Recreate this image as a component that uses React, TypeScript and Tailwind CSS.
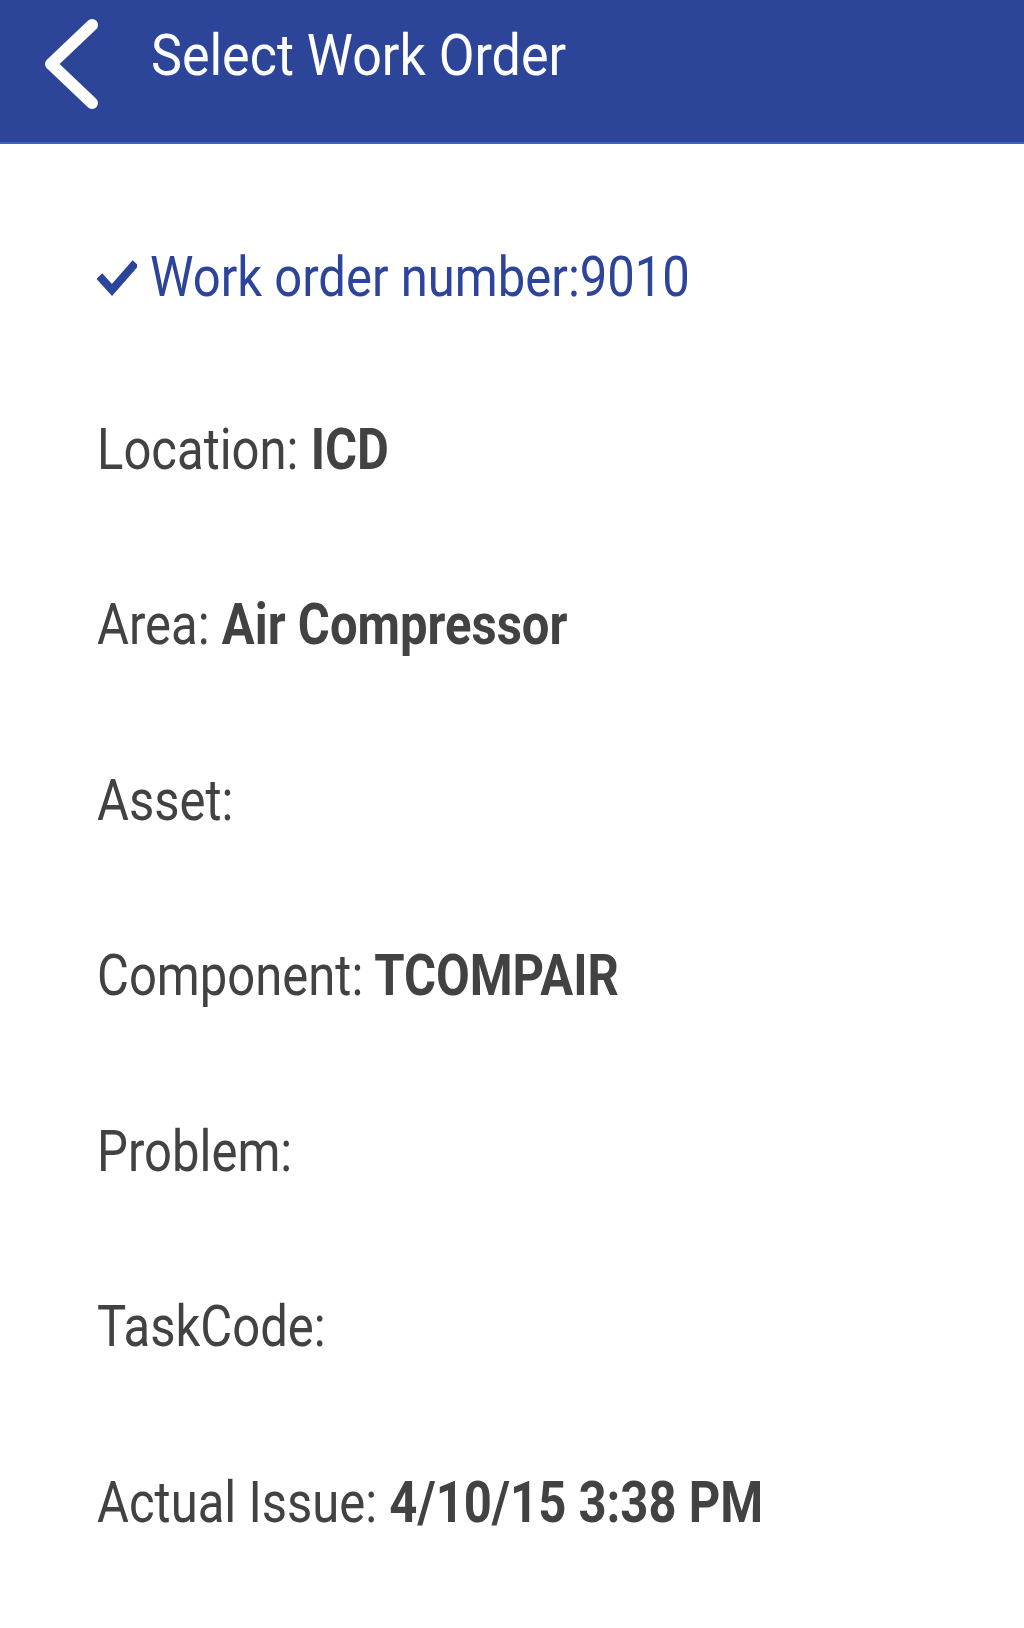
import { ReactNode } from "react";

const rows: { label: string; value?: string }[] = [
  { label: "Location:", value: "ICD" },
  { label: "Area:", value: "Air Compressor" },
  { label: "Asset:" },
  { label: "Component:", value: "TCOMPAIR" },
  { label: "Problem:" },
  { label: "TaskCode:" },
  { label: "Actual Issue:", value: "4/10/15 3:38 PM" },
];

const Row = ({ children }: { children: ReactNode }) => (
  <div className="h-[175.5px] flex items-center">{children}</div>
);

export default function App() {
  return (
    <div className="w-[1024px] min-h-[1628px] bg-white font-['Roboto',sans-serif]">
      <header className="h-[144px] bg-[#2c4599] border-b-2 border-[#3d62cf] flex items-start">
        <svg width="60" height="100" viewBox="0 0 60 100" className="ml-[42px] mt-[12px]">
          <polyline
            points="50,13 9,52 50,91"
            fill="none"
            stroke="white"
            strokeWidth="12"
            strokeLinecap="round"
            strokeLinejoin="round"
          />
        </svg>
        <h1 className="ml-[49px] mt-[30px] text-white text-[52px] leading-none inline-block scale-y-[1.1]">
          Select Work Order
        </h1>
      </header>

      <main className="pl-[97px] pt-[42px]">
        <Row>
          <div className="flex items-center mt-[8px]">
            <svg width="40" height="40" viewBox="0 0 40 40" className="mr-[13px] mt-[1px]">
              <polyline
                points="5,21 15,32 36,8"
                fill="none"
                stroke="#2c459b"
                strokeWidth="8"
                strokeLinecap="square"
                strokeLinejoin="miter"
              />
            </svg>
            <span className="text-[#2c459b] text-[49px] leading-none inline-block scale-y-[1.15]">
              Work order number:9010
            </span>
          </div>
        </Row>
        {rows.map((r) => (
          <Row key={r.label}>
            <span className="text-[#424242] text-[49px] leading-none inline-block scale-y-[1.18]">
              {r.label}
              {r.value ? <b className="font-bold"> {r.value}</b> : null}
            </span>
          </Row>
        ))}
      </main>
    </div>
  );
}
